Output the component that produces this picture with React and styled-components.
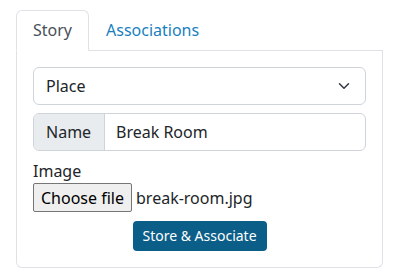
import React from "react";
import styled, { createGlobalStyle } from "styled-components";

const Global = createGlobalStyle`
  html, body { margin: 0; padding: 0; background: #fff; }
  body {
    font-family: "Noto Sans", "Open Sans", sans-serif;
    font-size: 16px;
    line-height: 24px;
    color: #212529;
  }
  * { box-sizing: border-box; }
`;

const Page = styled.div`
  padding: 10px 17px 0 16px;
  width: 400px;
`;

const TabList = styled.div`
  display: flex;
  border-bottom: 1px solid #dee2e6;
`;

const Tab = styled.div`
  padding: 8px 16px;
  margin-bottom: -1px;
  border: 1px solid ${(p) => (p.$active ? "#dee2e6" : "transparent")};
  border-bottom-color: ${(p) => (p.$active ? "#fff" : "transparent")};
  border-radius: 6px 6px 0 0;
  background: ${(p) => (p.$active ? "#fff" : "transparent")};
  color: ${(p) => (p.$active ? "#495057" : "#1a7fc0")};
  line-height: 23px;
`;

const Panel = styled.div`
  border: 1px solid #dee2e6;
  border-top: none;
  border-radius: 0 0 6px 6px;
  padding: 16px;
  display: flex;
  flex-direction: column;
`;

const Select = styled.div`
  height: 38px;
  border: 1px solid #ced4da;
  border-radius: 6px;
  padding: 6px 12px;
  display: flex;
  align-items: center;
  justify-content: space-between;
`;

const InputGroup = styled.div`
  margin-top: 8px;
  height: 38px;
  display: flex;
  border: 1px solid #ced4da;
  border-radius: 6px;
  overflow: hidden;
`;

const Addon = styled.div`
  background: #e9ecef;
  border-right: 1px solid #ced4da;
  padding: 6px 12px;
  width: 71px;
  display: flex;
  align-items: center;
`;

const Field = styled.div`
  flex: 1;
  padding: 6px 11px;
  display: flex;
  align-items: center;
`;

const Label = styled.div`
  margin-top: 8px;
  line-height: 24px;
`;

const FileRow = styled.div`
  display: flex;
  align-items: center;
  height: 29px;
`;

const FileButton = styled.div`
  height: 29px;
  width: 99px;
  background: #efefef;
  border: 1px solid #767676;
  border-radius: 2px;
  display: flex;
  align-items: center;
  justify-content: center;
  margin-right: 4px;
  color: #000;
`;

const FileName = styled.span`
  color: #212529;
`;

const Submit = styled.div`
  margin: 9px auto 0;
  height: 30px;
  padding: 0 10px;
  width: 134px;
  background: #0b5e88;
  color: #fff;
  font-size: 14px;
  border-radius: 4px;
  display: flex;
  align-items: center;
  justify-content: center;
  white-space: nowrap;
`;

const Chevron = () => (
  <svg width="12" height="12" viewBox="0 0 16 16" style={{ marginRight: 3 }}>
    <path d="M2 5l6 6 6-6" fill="none" stroke="#343a40" strokeWidth="2" strokeLinecap="round" strokeLinejoin="round" />
  </svg>
);

export default function App() {
  return (
    <>
      <Global />
      <Page>
        <TabList>
          <Tab $active>Story</Tab>
          <Tab>Associations</Tab>
        </TabList>
        <Panel>
          <Select>
            <span>Place</span>
            <Chevron />
          </Select>
          <InputGroup>
            <Addon>Name</Addon>
            <Field>Break Room</Field>
          </InputGroup>
          <Label>Image</Label>
          <FileRow>
            <FileButton>Choose file</FileButton>
            <FileName>break-room.jpg</FileName>
          </FileRow>
          <Submit>Store &amp; Associate</Submit>
        </Panel>
      </Page>
    </>
  );
}
